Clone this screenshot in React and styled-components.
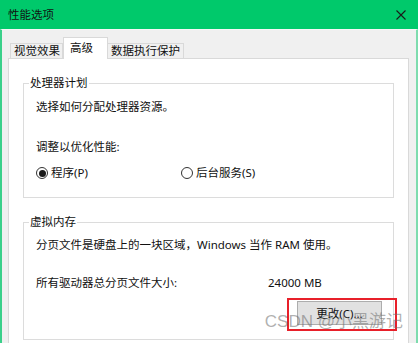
import React from 'react';
import styled, { createGlobalStyle } from 'styled-components';

var Global = createGlobalStyle`
html, body {
  margin:0;
  padding:0;
  background:#f0f0f0;
}
* { box-sizing:border-box; }
`

class App extends React.Component{
  constructor(props){
    super(props)
    this.state = {
      tabs:['视觉效果','高级','数据执行保护'],
      active:1,
      mode:'program'
    }
  }

  render(){
    return(
<Window>
  <Global />
  <TitleBar>
    <TitleText>性能选项</TitleText>
    <CloseIcon viewBox="0 0 10 10">
      <path d="M0.5 0.5 L9.5 9.5 M9.5 0.5 L0.5 9.5" stroke="#1a1a1a" strokeWidth="1.1" />
    </CloseIcon>
  </TitleBar>
  <Body>
    <TabRow>
      {this.state.tabs.map((t,index)=>
        <Tab key={t} active={index===this.state.active} w={[53,45,76][index]} pl={[3,6,3][index]}>{t}</Tab>
      )}
    </TabRow>
    <Panel>
      <Group>
        <Legend>处理器计划</Legend>
        <Line top={8}>选择如何分配处理器资源。</Line>
        <Line top={24}>调整以优化性能:</Line>
        <RadioRow>
          <Radio>
            <Circle checked={this.state.mode==='program'} />
            <span>程序(P)</span>
          </Radio>
          <Radio>
            <Circle checked={this.state.mode==='service'} />
            <span>后台服务(S)</span>
          </Radio>
        </RadioRow>
      </Group>
      <Group second>
        <Legend>虚拟内存</Legend>
        <Line top={7}>分页文件是硬盘上的一块区域，Windows 当作 RAM 使用。</Line>
        <SizeRow>
          <span>所有驱动器总分页文件大小:</span>
          <span>24000 MB</span>
        </SizeRow>
        <ButtonRow>
          <Marked>
            <Button>更改(C)...</Button>
          </Marked>
        </ButtonRow>
      </Group>
    </Panel>
  </Body>
  <Watermark>CSDN @小黑游记</Watermark>
</Window>
    )
  }
}

var Window = styled.div`
position:relative;
width:418px;
height:343px;
overflow:hidden;
background:#f0f0f0;
font-family:'Noto Sans','Noto Sans CJK SC',sans-serif;
font-size:11.5px;
color:#111;
`
var TitleBar = styled.div`
height:29px;
background:#00c96b;
display:flex;
align-items:center;
justify-content:space-between;
padding:0 12px 0 8px;
`
var TitleText = styled.div`
font-size:11.5px;
color:#111;
line-height:16px;
`
var CloseIcon = styled.svg`
width:10px;
height:10px;
`
var Body = styled.div`
height:314px;
border-left:2px solid #3ad08a;
border-right:2px solid #7ddcae;
border-top:1px solid #f7f7f7;
padding:7px 7px 0 6px;
`
var TabRow = styled.div`
display:flex;
align-items:flex-end;
margin-left:2px;
margin-bottom:-1px;
position:relative;
z-index:1;
`
var Tab = styled.div`
width:${p=>p.w}px;
height:${p=>p.active ? 22 : 16}px;
padding-left:${p=>p.pl}px;
line-height:${p=>p.active ? 19 : 13}px;
border:1px solid #d9d9d9;
border-bottom:${p=>p.active ? 'none' : '1px solid #d9d9d9'};
border-left:${p=>p.active ? '1px solid #d9d9d9' : 'none'};
background:${p=>p.active ? '#fff' : '#f0f0f0'};
white-space:nowrap;
&:first-child{ border-left:1px solid #d9d9d9; }
`
var Panel = styled.div`
background:#fff;
border:1px solid #d9d9d9;
height:320px;
padding:16px 14px 0 14px;
`
var Group = styled.fieldset`
margin:${p=>p.second ? 16 : 0}px 0 0 0;
padding:0 11px ${p=>p.second ? 14 : 16}px 12px;
border:1px solid #dcdcdc;
min-width:0;
`
var Legend = styled.legend`
padding:0 1px;
margin-left:-7px;
line-height:16px;
`
var Line = styled.div`
margin-top:${p=>p.top}px;
line-height:16px;
white-space:nowrap;
`
var RadioRow = styled.div`
display:grid;
grid-template-columns:145px auto;
margin-top:10px;
line-height:16px;
`
var Radio = styled.label`
display:flex;
align-items:center;
gap:3px;
`
var Circle = styled.span`
width:12px;
height:12px;
border:1px solid #333;
border-radius:50%;
display:flex;
align-items:center;
justify-content:center;
&::after{
  content:'';
  width:7px;
  height:7px;
  border-radius:50%;
  background:${p=>p.checked ? '#1a1a1a' : 'transparent'};
}
`
var SizeRow = styled.div`
display:grid;
grid-template-columns:232px auto;
margin-top:22px;
line-height:16px;
`
var ButtonRow = styled.div`
display:flex;
justify-content:flex-end;
margin-top:10px;
`
var Marked = styled.div`
position:relative;
&::after{
  content:'';
  position:absolute;
  top:-3px;
  left:-10px;
  right:-15px;
  bottom:-6px;
  border:2px solid #e8202a;
  pointer-events:none;
}
`
var Button = styled.button`
width:85px;
height:24px;
background:#e1e1e1;
border:1px solid #adadad;
font-family:'Noto Sans','Noto Sans CJK SC',sans-serif;
font-size:11.5px;
color:#111;
padding:0;
`
var Watermark = styled.div`
position:absolute;
right:15px;
top:312px;
font-family:'Liberation Sans','Noto Sans CJK SC',sans-serif;
font-size:17px;
line-height:20px;
color:rgba(110,110,110,0.55);
white-space:nowrap;
`

export default App;
